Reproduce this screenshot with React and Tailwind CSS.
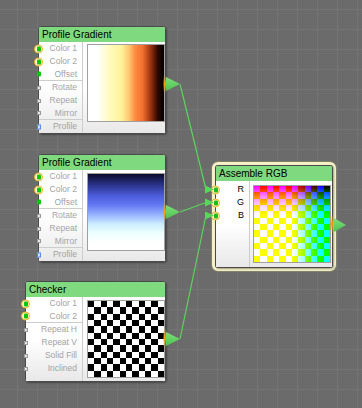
import React from "react";

const gradientRows = [
  { label: "Color 1", c: "ring" },
  { label: "Color 2", c: "ring" },
  { label: "Offset", c: "green", sep: true },
  { label: "Rotate", c: "gray" },
  { label: "Repeat", c: "gray" },
  { label: "Mirror", c: "gray", sep: true },
  { label: "Profile", c: "blue" },
];

const checkerRows = [
  { label: "Color 1", c: "ring" },
  { label: "Color 2", c: "ring", sep: true },
  { label: "Repeat H", c: "gray" },
  { label: "Repeat V", c: "gray" },
  { label: "Solid Fill", c: "gray" },
  { label: "Inclined", c: "gray" },
];

const rgbRows = [
  { label: "R", c: "ring", dark: true },
  { label: "G", c: "ring", dark: true },
  { label: "B", c: "ring", dark: true },
];

const cells = Array.from({ length: 144 }, (_, i) => i);

const Connector = ({ kind }) => {
  if (kind === "ring") {
    return (
      <span className="absolute left-[-5px] top-1/2 -translate-y-1/2 w-[9px] h-[9px] rounded-full border border-[#eab21c] bg-[#fdf6d8] flex items-center justify-center">
        <span className="w-[4px] h-[5px] bg-[#12c212] rounded-[1px]" />
      </span>
    );
  }
  if (kind === "green") {
    return <span className="absolute left-[-2px] top-1/2 -translate-y-1/2 w-[4px] h-[5px] bg-[#12c212] rounded-[1px]" />;
  }
  if (kind === "blue") {
    return <span className="absolute left-[-2px] top-1/2 -translate-y-1/2 w-[4px] h-[5px] border border-[#5a86ff] bg-[#cfdcff]" />;
  }
  return <span className="absolute left-[-2px] top-1/2 -translate-y-1/2 w-[4px] h-[4px] border border-[#9a9a9a] bg-[#e4e4e4]" />;
};

const Node = ({ title, className, labelW, rows, rowsPad, previewPad, children }) => (
  <div className={`flex flex-col rounded-[3px] border border-[#4a4a4a] shadow-[1px_1px_2px_rgba(0,0,0,0.35)] bg-white ${className}`}>
    <div className="h-[15px] bg-[#7fd97f] rounded-t-[2px] px-[3px] text-[10px] leading-[15px] text-black whitespace-nowrap">
      {title}
    </div>
    <div className="flex flex-1 bg-gradient-to-b from-white via-white to-[#e8e8e8]">
      <div className={`flex flex-col ${labelW} ${rowsPad}`}>
        {rows.map((r) => (
          <div
            key={r.label}
            className={`relative h-[13px] flex items-center justify-end pr-[5px] leading-none whitespace-nowrap ${
              r.dark ? "text-[9px] text-black" : "text-[8.5px] text-[#a3a3a3]"
            } ${r.sep ? "border-b border-[#cdcdcd]" : ""}`}
          >
            <Connector kind={r.c} />
            {r.label}
          </div>
        ))}
      </div>
      <div className={`flex-1 border-l border-[#cdcdcd] ${previewPad}`}>{children}</div>
    </div>
  </div>
);

const Frame = ({ children }) => (
  <div className="relative w-[78px] h-[78px] border border-[#a0a0a0] overflow-hidden isolate">{children}</div>
);

const Checker = ({ on, off }) => (
  <div className="absolute inset-0 grid grid-cols-12 grid-rows-12">
    {cells.map((i) => (
      <div key={i} className={(Math.floor(i / 12) + (i % 12)) % 2 === 0 ? on : off} />
    ))}
  </div>
);

export default function App() {
  return (
    <div className="relative w-[362px] h-[408px] overflow-hidden bg-[#6b6b6b] bg-[linear-gradient(#747474_1px,transparent_1px),linear-gradient(90deg,#747474_1px,transparent_1px)] bg-[length:20px_20px] bg-[position:17px_9px] font-['Liberation_Sans',Arial,sans-serif]">
      <Node
        title="Profile Gradient"
        className="absolute left-[38px] top-[26px] w-[128px]"
        labelW="w-[43px]"
        rows={gradientRows}
        rowsPad=""
        previewPad="pl-[4px] pt-[2px]"
      >
        <Frame>
          <div className="absolute inset-0 bg-[linear-gradient(to_right,#fff_0%,#fff_12%,#fffbc0_28%,#fff39a_44%,#ffc870_54%,#ff8a42_62%,#f2702e_72%,#a03410_82%,#2a0800_92%,#000_100%)]" />
        </Frame>
      </Node>

      <Node
        title="Profile Gradient"
        className="absolute left-[38px] top-[154px] w-[128px]"
        labelW="w-[43px]"
        rows={gradientRows}
        rowsPad=""
        previewPad="pl-[4px] pt-[3px]"
      >
        <Frame>
          <div className="absolute inset-0 bg-[linear-gradient(to_bottom,#0c0c28_0%,#2a3288_14%,#4a5ad8_28%,#6276f2_40%,#98b4ff_54%,#cdeeff_66%,#ecffff_78%,#fff_90%)]" />
        </Frame>
      </Node>

      <Node
        title="Checker"
        className="absolute left-[25px] top-[281px] w-[141px]"
        labelW="w-[56px]"
        rows={checkerRows}
        rowsPad=""
        previewPad="pl-[4px] pt-[3px] pb-[3px]"
      >
        <Frame>
          <Checker on="bg-black" off="bg-white" />
        </Frame>
      </Node>

      <div className="absolute left-[212px] top-[162px] rounded-[6px] border-[3px] border-[#f7f2c6] shadow-[0_0_0_1px_#80806a]">
        <Node
          title="Assemble RGB"
          className="w-[118px]"
          labelW="w-[33px]"
          rows={rgbRows}
          rowsPad="pt-[2px]"
          previewPad="pl-[3px] pt-[4px] pb-[4px]"
        >
          <Frame>
            <div className="absolute inset-0 bg-[linear-gradient(to_right,#f00_0%,#f00_50%,#b00_62%,#500_76%,#100_88%,#000_100%)]" />
            <div className="absolute inset-0 mix-blend-screen bg-[linear-gradient(to_bottom,#000_0%,#080_14%,#0d0_28%,#0f0_40%,#0f0_100%)]" />
            <div className="absolute inset-0 mix-blend-screen">
              <Checker on="bg-[#00f]" off="bg-black" />
            </div>
          </Frame>
        </Node>
      </div>

      <svg className="absolute inset-0 pointer-events-none" width="362" height="408" viewBox="0 0 362 408">
        <defs>
          <linearGradient id="ob" x1="0" y1="0" x2="0" y2="1">
            <stop offset="0" stopColor="#ffb000" stopOpacity="0" />
            <stop offset="0.5" stopColor="#ff9a00" />
            <stop offset="1" stopColor="#ffb000" stopOpacity="0" />
          </linearGradient>
          <linearGradient id="tri" x1="0" y1="0" x2="0" y2="1">
            <stop offset="0" stopColor="#7fe07f" />
            <stop offset="1" stopColor="#4cc24c" />
          </linearGradient>
        </defs>
        <g stroke="#5ad65a" strokeWidth="1.2" fill="none">
          <path d="M180 84 L206 189.5" />
          <path d="M180 212 L206 202.5" />
          <path d="M180 339 L206 215.5" />
        </g>
        <g fill="#5ad65a">
          <polygon points="205,185.5 214,189.5 205,193.5" />
          <polygon points="205,198.5 214,202.5 205,206.5" />
          <polygon points="205,211.5 214,215.5 205,219.5" />
        </g>
        <rect x="163.5" y="75" width="2.5" height="18" fill="url(#ob)" />
        <rect x="163.5" y="203" width="2.5" height="18" fill="url(#ob)" />
        <rect x="163.5" y="328" width="2.5" height="20" fill="url(#ob)" />
        <rect x="330.5" y="214" width="2.5" height="20" fill="url(#ob)" />
        <g fill="url(#tri)">
          <polygon points="166,77 180,84 166,91" />
          <polygon points="166,205 180,212 166,219" />
          <polygon points="166,332 180,339 166,346" />
          <polygon points="334,218 346,225 334,232" />
        </g>
      </svg>
    </div>
  );
}
